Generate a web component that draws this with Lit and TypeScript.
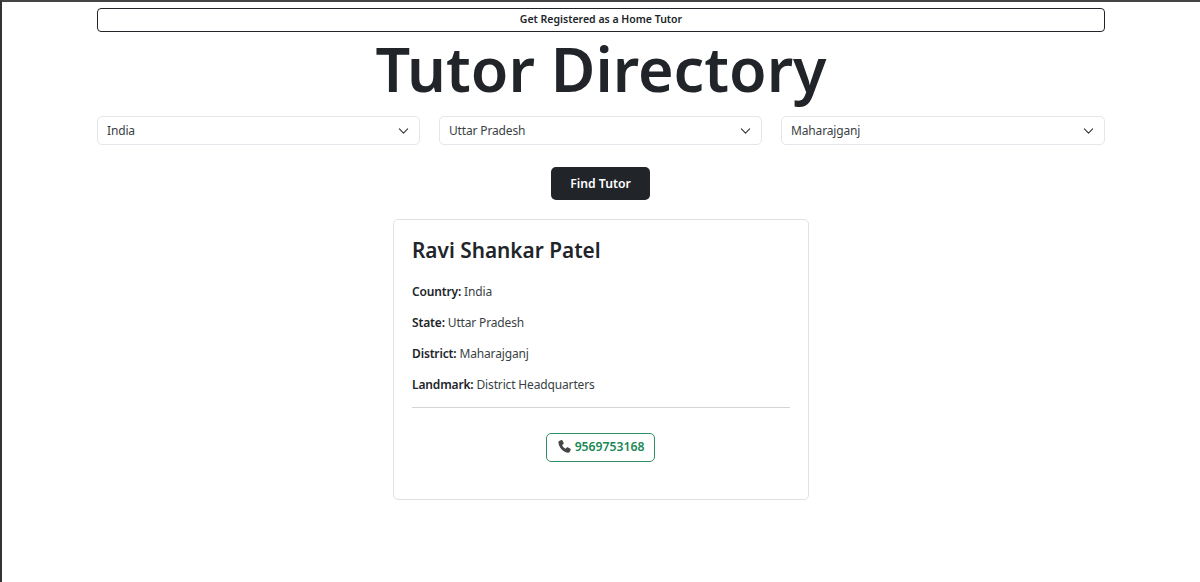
import { LitElement, html, css } from "lit";
import { customElement } from "lit/decorators.js";

const chevron = html`<svg class="chev" viewBox="0 0 16 16" width="11" height="12" aria-hidden="true"><path fill="none" stroke="#343a40" stroke-linecap="round" stroke-linejoin="round" stroke-width="1.7" d="m2 5 6 6 6-6"/></svg>`;

@customElement("app-root")
export class AppRoot extends LitElement {
  static styles = css`
    :host {
      display: block;
      box-sizing: border-box;
      height: 582px;
      border-top: 2px solid #444;
      border-left: 2px solid #333;
      font-family: "Noto Sans", "Open Sans", sans-serif;
      color: #212529;
      background: #fff;
      overflow: hidden;
    }
    .wrap {
      width: 1008px;
      margin-left: 95px;
      padding-top: 6px;
      display: flex;
      flex-direction: column;
    }
    .register {
      height: 24px;
      box-sizing: border-box;
      border: 1px solid #212529;
      border-radius: 4px;
      padding-bottom: 2px;
      display: flex;
      align-items: center;
      justify-content: center;
      font-size: 10.5px;
      font-weight: 600;
      color: #212529;
    }
    h1 {
      margin: 0;
      font-size: 61px;
      line-height: 74px;
      height: 84px;
      font-weight: 600;
      text-align: center;
      color: #212529;
    }
    .selects {
      display: grid;
      grid-template-columns: 323px 323px 324px;
      gap: 19px;
    }
    .select {
      height: 29px;
      box-sizing: border-box;
      border: 1px solid #e3e6ea;
      border-radius: 5px;
      display: flex;
      align-items: center;
      justify-content: space-between;
      padding: 0 10px 0 9px;
      font-size: 12px;
      letter-spacing: -0.15px;
      color: #3a3f44;
    }
    .select span { margin-top: -1px; }
    .chev { display: block; }
    .action { display: flex; justify-content: center; margin-top: 22px; }
    .find {
      width: 99px;
      height: 33px;
      margin-right: 1px;
      border-radius: 5px;
      background: #212529;
      color: #fff;
      display: flex;
      align-items: center;
      justify-content: center;
      font-size: 12.2px;
      font-weight: 600;
    }
    .card {
      box-sizing: border-box;
      align-self: center;
      margin-top: 19px;
      width: 416px;
      height: 281px;
      border: 1px solid #dee2e6;
      border-radius: 5px;
      padding: 17px 18px;
    }
    h2 {
      margin: 0 0 20px;
      font-size: 20.8px;
      line-height: 26px;
      font-weight: 600;
      color: #212529;
    }
    p {
      margin: 0 0 13px;
      font-size: 12px;
      letter-spacing: -0.15px;
      line-height: 18px;
      color: #3a3f44;
    }
    b { font-weight: 600; color: #212529; }
    hr { border: 0; border-top: 1px solid #d2d4d6; margin: 0; }
    .call { display: flex; justify-content: center; margin-top: 25px; }
    .phone {
      box-sizing: border-box;
      width: 109px;
      height: 29px;
      margin-right: 1px;
      border: 1px solid #2f9068;
      border-radius: 5px;
      padding-bottom: 2px;
      display: flex;
      align-items: center;
      justify-content: center;
      gap: 3px;
      color: #198754;
      font-size: 12.2px;
      font-weight: 600;
    }
  `;

  render() {
    return html`<div class="wrap">
      <div class="register">Get Registered as a Home Tutor</div>
      <h1>Tutor Directory</h1>
      <div class="selects">
        <div class="select"><span>India</span>${chevron}</div>
        <div class="select"><span>Uttar Pradesh</span>${chevron}</div>
        <div class="select"><span>Maharajganj</span>${chevron}</div>
      </div>
      <div class="action"><div class="find">Find Tutor</div></div>
      <div class="card">
        <h2>Ravi Shankar Patel</h2>
        <p><b>Country:</b> India</p>
        <p><b>State:</b> Uttar Pradesh</p>
        <p><b>District:</b> Maharajganj</p>
        <p><b>Landmark:</b> District Headquarters</p>
        <hr />
        <div class="call"><div class="phone">
          <svg viewBox="0 0 24 24" width="15" height="15" aria-hidden="true"><path fill="#454545" d="M3.5 3.2 7 1.6c.8-.3 1.4 0 1.7.6l2 4.2c.3.6.1 1.1-.4 1.5L8.2 9.5c.9 2.6 3 4.9 5.6 6l1.8-2c.4-.5 1-.6 1.5-.3l4.3 2.2c.6.3.9 1 .6 1.7l-1.5 3.4c-.5 1-1.3 1.4-2.4 1.3C10.300 21.200 3 13.700 2.300 5.400c-.1-1 .3-1.800 1.200-2.200Z"/></svg>
          <span>9569753168</span>
        </div></div>
      </div>
    </div>`;
  }
}
